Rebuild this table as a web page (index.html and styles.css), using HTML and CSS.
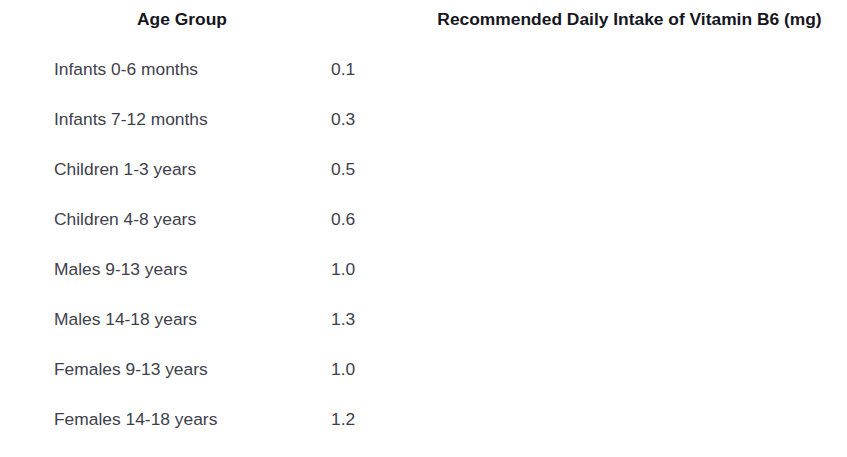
FILE: index.html
```html
<!DOCTYPE html>
<html lang="en">
<head>
<meta charset="utf-8">
<title>Vitamin B6 Intake</title>
<link rel="stylesheet" href="styles.css">
</head>
<body>
<div class="intake-table">
  <div class="head-row">
    <div class="head-cell">Age Group</div>
    <div class="head-cell head-cell--value">Recommended Daily Intake of Vitamin B6 (mg)</div>
  </div>
  <div class="body-rows">
    <div class="row"><div class="cell">Infants 0-6 months</div><div class="cell">0.1</div></div>
    <div class="row"><div class="cell">Infants 7-12 months</div><div class="cell">0.3</div></div>
    <div class="row"><div class="cell">Children 1-3 years</div><div class="cell">0.5</div></div>
    <div class="row"><div class="cell">Children 4-8 years</div><div class="cell">0.6</div></div>
    <div class="row"><div class="cell">Males 9-13 years</div><div class="cell">1.0</div></div>
    <div class="row"><div class="cell">Males 14-18 years</div><div class="cell">1.3</div></div>
    <div class="row"><div class="cell">Females 9-13 years</div><div class="cell">1.0</div></div>
    <div class="row"><div class="cell">Females 14-18 years</div><div class="cell">1.2</div></div>
  </div>
</div>
</body>
</html>
```
FILE: styles.css
```css
html, body {
  margin: 0;
  padding: 0;
  background: #ffffff;
}

body {
  font-family: "Liberation Sans", Arial, sans-serif;
  font-size: 17.4px;
  line-height: 22px;
  overflow: hidden;
}

.intake-table {
  width: 847px;
}

.head-row {
  display: grid;
  grid-template-columns: 364px 1fr;
  padding: 8px 0;
}

.head-cell {
  font-weight: bold;
  color: #161622;
  text-align: center;
}

.head-cell--value {
  padding-left: 48px;
}

.body-rows {
  margin-top: 6px;
}

.row {
  display: grid;
  grid-template-columns: 277px 1fr;
  padding: 14px 0 14px 54px;
  color: #40404c;
}
```
